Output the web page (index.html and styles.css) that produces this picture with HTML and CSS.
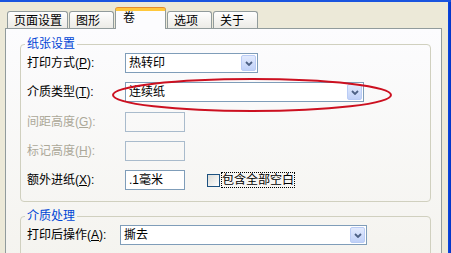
FILE: index.html
```html
<!DOCTYPE html>
<html lang="zh-CN">
<head>
<meta charset="utf-8">
<title>卷</title>
<link rel="stylesheet" href="styles.css">
</head>
<body>
<div class="window">
  <div class="frame-top"></div>
  <div class="frame-row">
    <div class="client">
      <div class="tabs">
        <div class="tab">页面设置</div>
        <div class="tab">图形</div>
        <div class="tab active">卷</div>
        <div class="tab">选项</div>
        <div class="tab">关于</div>
      </div>
      <div class="panel">
        <fieldset class="group">
          <legend>纸张设置</legend>
          <div class="form form-paper">
            <span class="label">打印方式(<u>P</u>):</span>
            <div class="combo combo-short"><span class="combo-text">热转印</span><span class="combo-btn"><svg width="8" height="5" viewBox="0 0 8 5"><polyline points="1,1 4,4 7,1" fill="none" stroke="#4D6185" stroke-width="1.8"/></svg></span></div>

            <span class="label">介质类型(<u>T</u>):</span>
            <div class="combo combo-long"><span class="combo-text">连续纸</span><span class="combo-btn"><svg width="8" height="5" viewBox="0 0 8 5"><polyline points="1,1 4,4 7,1" fill="none" stroke="#4D6185" stroke-width="1.8"/></svg></span></div>

            <span class="label disabled">间距高度(<u>G</u>):</span>
            <div class="edit edit-disabled"></div>

            <span class="label disabled">标记高度(<u>H</u>):</span>
            <div class="edit edit-disabled"></div>

            <span class="label">额外进纸(<u>X</u>):</span>
            <div class="field-line">
              <div class="edit">.1毫米</div>
              <div class="check">
                <span class="check-box"></span>
                <span class="check-label">包含全部空白</span>
              </div>
            </div>
          </div>
        </fieldset>
        <fieldset class="group group-media">
          <legend>介质处理</legend>
          <div class="form form-media">
            <span class="label">打印后操作(<u>A</u>):</span>
            <div class="combo combo-wide"><span class="combo-text">撕去</span><span class="combo-btn"><svg width="8" height="5" viewBox="0 0 8 5"><polyline points="1,1 4,4 7,1" fill="none" stroke="#4D6185" stroke-width="1.8"/></svg></span></div>
          </div>
        </fieldset>
      </div>
    </div>
    <div class="frame-right"></div>
  </div>
  <svg class="annotation" width="286" height="40" viewBox="0 0 286 40">
    <ellipse cx="142" cy="18" rx="139" ry="16" fill="none" stroke="#CC1020" stroke-width="2"/>
  </svg>
</div>
</body>
</html>
```

FILE: styles.css
```css
html, body {
  margin: 0;
  padding: 0;
}

body {
  width: 451px;
  height: 253px;
  overflow: hidden;
  background: #ECE9D8;
  font-family: "Liberation Sans", "Noto Sans CJK SC", sans-serif;
  font-size: 12px;
  color: #000;
}

.window {
  position: relative;
  display: flex;
  flex-direction: column;
  height: 253px;
}

.frame-top {
  height: 2px;
  background: #1A54DF;
  flex: none;
}

.frame-row {
  flex: 1;
  display: flex;
  min-height: 0;
}

.frame-right {
  width: 3px;
  background: linear-gradient(to right, #0A48DE, #0533C6);
  flex: none;
}

.client {
  flex: 1;
  padding: 6px 6px 0 5px;
  display: flex;
  flex-direction: column;
  min-width: 0;
}

/* tabs */
.tabs {
  display: flex;
  align-items: flex-end;
  padding-left: 2px;
  position: relative;
  z-index: 1;
}

.tab {
  box-sizing: border-box;
  min-width: 45px;
  height: 17px;
  margin-right: 1px;
  padding: 2px 5px 0 6px;
  line-height: 14px;
  border: 1px solid #919B9C;
  border-bottom: none;
  border-radius: 3px 3px 0 0;
  background: linear-gradient(#FEFEFE, #ECEBE6);
  white-space: nowrap;
}

.tab.active {
  min-width: 51px;
  height: 21px;
  margin-bottom: -1px;
  padding: 0 5px 0 7px;
  border-top: 3px solid #FFC83C;
  box-shadow: 0 -1px 0 #E68B2C;
  background: #FCFCFE;
}

.panel {
  flex: 1;
  border: 1px solid #919B9C;
  border-bottom: none;
  padding: 9px 10px 0 14px;
  background: linear-gradient(#FCFCFE, #F4F3EE 240px);
}

/* group boxes */
.group {
  margin: 0;
  border: 1px solid #D0D0BF;
  border-radius: 4px;
  padding: 3px 6px 11px 6px;
  min-width: 0;
}

.group legend {
  padding: 0 2px;
  margin-left: -2px;
  line-height: 12px;
  color: #0046D5;
}

.group-media {
  margin-top: 8px;
}

.form {
  display: grid;
  row-gap: 9.25px;
  grid-auto-rows: 20px;
  align-items: center;
}

.form-paper {
  grid-template-columns: 98px 1fr;
}

.form-media {
  grid-template-columns: 93px 1fr;
}

.label {
  white-space: nowrap;
  line-height: 14px;
}

.label.disabled {
  color: #ACA899;
}

/* combo boxes */
.combo {
  box-sizing: border-box;
  height: 20px;
  border: 1px solid #7F9DB9;
  background: #FFFFFF;
  display: flex;
  align-items: center;
  padding: 0 1px 0 3px;
}

.combo-short { width: 133px; }
.combo-long { width: 239px; }
.combo-wide { width: 247px; }

.combo-text {
  flex: 1;
  line-height: 14px;
}

.combo-btn {
  box-sizing: border-box;
  width: 15px;
  height: 16px;
  border: 1px solid #BACCF5;
  border-radius: 2px;
  background: linear-gradient(#E2EAFD, #C0D1F8);
  display: flex;
  align-items: center;
  justify-content: center;
}

/* edits */
.edit {
  box-sizing: border-box;
  width: 60px;
  height: 20px;
  border: 1px solid #7F9DB9;
  background: #FFFFFF;
  padding: 0 3px;
  line-height: 18px;
}

.edit-disabled {
  border-color: #A9BBCC;
  background: transparent;
}

.field-line {
  display: flex;
  align-items: center;
}

.check {
  display: flex;
  align-items: center;
  margin-left: 22px;
}

.check-box {
  box-sizing: border-box;
  width: 13px;
  height: 13px;
  border: 1px solid #1C5180;
  background: linear-gradient(135deg, #DCDCD7, #FFFFFF);
  margin-right: 1px;
}

.check-label {
  border: 1px dotted #000;
  line-height: 14px;
  white-space: nowrap;
}

/* annotation drawn over the form */
.annotation {
  position: absolute;
  left: 110px;
  top: 77px;
  pointer-events: none;
}
```
